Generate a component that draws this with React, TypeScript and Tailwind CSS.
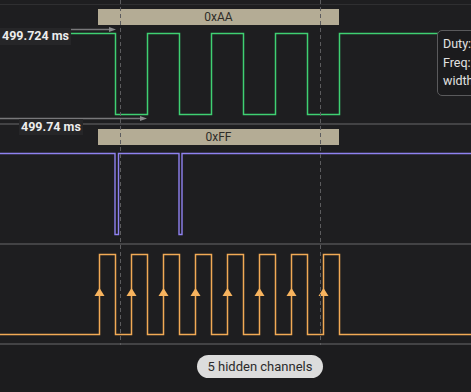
import React from "react";

const font = { fontFamily: "Roboto, 'Liberation Sans', sans-serif" };

// green channel: bit edges every 32px
const greenPath =
  "M0,33.5 H115.5 V114.5 H147.5 V33.5 H179.5 V114.5 H211.5 V33.5 H243.5 V114.5 H275.5 V33.5 H307.5 V114.5 H339.5 V33.5 H471";

const purplePath = "M0,28.5 H115 V109.5 H118.5 V28.5 H179 V109.5 H182 V28.5 H471";

const clockRises = [99, 131, 163, 195, 227, 259, 291, 323];
const clockPath =
  "M0,89.5 " +
  clockRises.map((x) => `H${x + 0.5} V9.5 H${x + 16.5} V89.5`).join(" ") +
  " H471";

const DataBox: React.FC<{ label: string; className: string }> = ({ label, className }) => (
  <div
    className={`absolute left-[98px] w-[241px] h-[16px] bg-[#b4ac95] flex items-center justify-center text-[12px] text-[#2e2c28] ${className}`}
  >
    {label}
  </div>
);

const App: React.FC = () => {
  return (
    <div className="relative w-[471px] h-[392px] overflow-hidden bg-[#1e1e20] flex flex-col" style={font}>
      {/* channel 0 */}
      <div className="relative h-[123px] shrink-0">
        <svg className="absolute inset-0" width="471" height="123">
          <line x1="0" y1="4.5" x2="471" y2="4.5" stroke="#2f2f31" strokeWidth="1" />
          <path d={greenPath} fill="none" stroke="#3fd072" strokeWidth="1.5" />
          <line x1="0" y1="29.5" x2="111" y2="29.5" stroke="#78787a" strokeWidth="1.3" />
          <line x1="0" y1="118.5" x2="142" y2="118.5" stroke="#78787a" strokeWidth="1.3" />
          <polygon points="109,27 116,29.5 109,32" fill="#8a8a8c" />
          <polygon points="140,116 147,118.5 140,121" fill="#8a8a8c" />
        </svg>
        <DataBox label="0xAA" className="top-[9px]" />
        <div className="absolute left-0 top-[28px] h-[17px] px-[2px] bg-[#262628] flex items-center text-[12.5px] font-bold text-[#ececec]">
          499.724 ms
        </div>
        <div className="absolute left-[437px] top-[30px] w-[60px] h-[66px] rounded-[5px] border border-[#5a5a5c] bg-[#1b1b1d] pl-[5px] pt-[4px] text-[12.5px] leading-[18.5px] text-[#e2e2e2]">
          <div>Duty:</div>
          <div>Freq:</div>
          <div>width</div>
        </div>
      </div>
      <div className="h-[2px] shrink-0 bg-[#434345]" />

      {/* channel 1 */}
      <div className="relative h-[118px] shrink-0">
        <svg className="absolute inset-0" width="471" height="118">
          <path d={purplePath} fill="none" stroke="#8f82f0" strokeWidth="1.4" />
        </svg>
        <DataBox label="0xFF" className="top-[4px]" />
        <div className="absolute left-[19px] top-[-6px] h-[16px] px-[2px] bg-[#262628] flex items-center text-[12.5px] font-bold text-[#ececec]">
          499.74 ms
        </div>
      </div>
      <div className="h-[2px] shrink-0 bg-[#434345]" />

      {/* channel 2 */}
      <div className="relative h-[98px] shrink-0">
        <svg className="absolute inset-0" width="471" height="98">
          <path d={clockPath} fill="none" stroke="#f2aa55" strokeWidth="1.5" />
          {clockRises.map((x) => (
            <polygon key={x} points={`${x + 0.5},43 ${x + 5.5},51 ${x - 4.5},51`} fill="#f7b35e" />
          ))}
        </svg>
      </div>
      <div className="h-[2px] shrink-0 bg-[#434345]" />

      {/* footer */}
      <div className="flex-1 flex justify-center items-start pl-[49px] pt-[10px] bg-[#1c1c1e]">
        <div className="h-[23px] w-[126px] rounded-full bg-[#dcdcdc] flex items-center justify-center text-[13px] text-[#2b2b2b]">
          5 hidden channels
        </div>
      </div>

      {/* cursors */}
      <svg className="absolute left-0 top-0 pointer-events-none" width="471" height="345" shapeRendering="crispEdges">
        <line x1="120.5" y1="0" x2="120.5" y2="345" stroke="#5c5c5e" strokeWidth="1" strokeDasharray="4 3" />
        <line x1="320.5" y1="0" x2="320.5" y2="345" stroke="#5c5c5e" strokeWidth="1" strokeDasharray="4 3" />
      </svg>
    </div>
  );
};

export default App;
